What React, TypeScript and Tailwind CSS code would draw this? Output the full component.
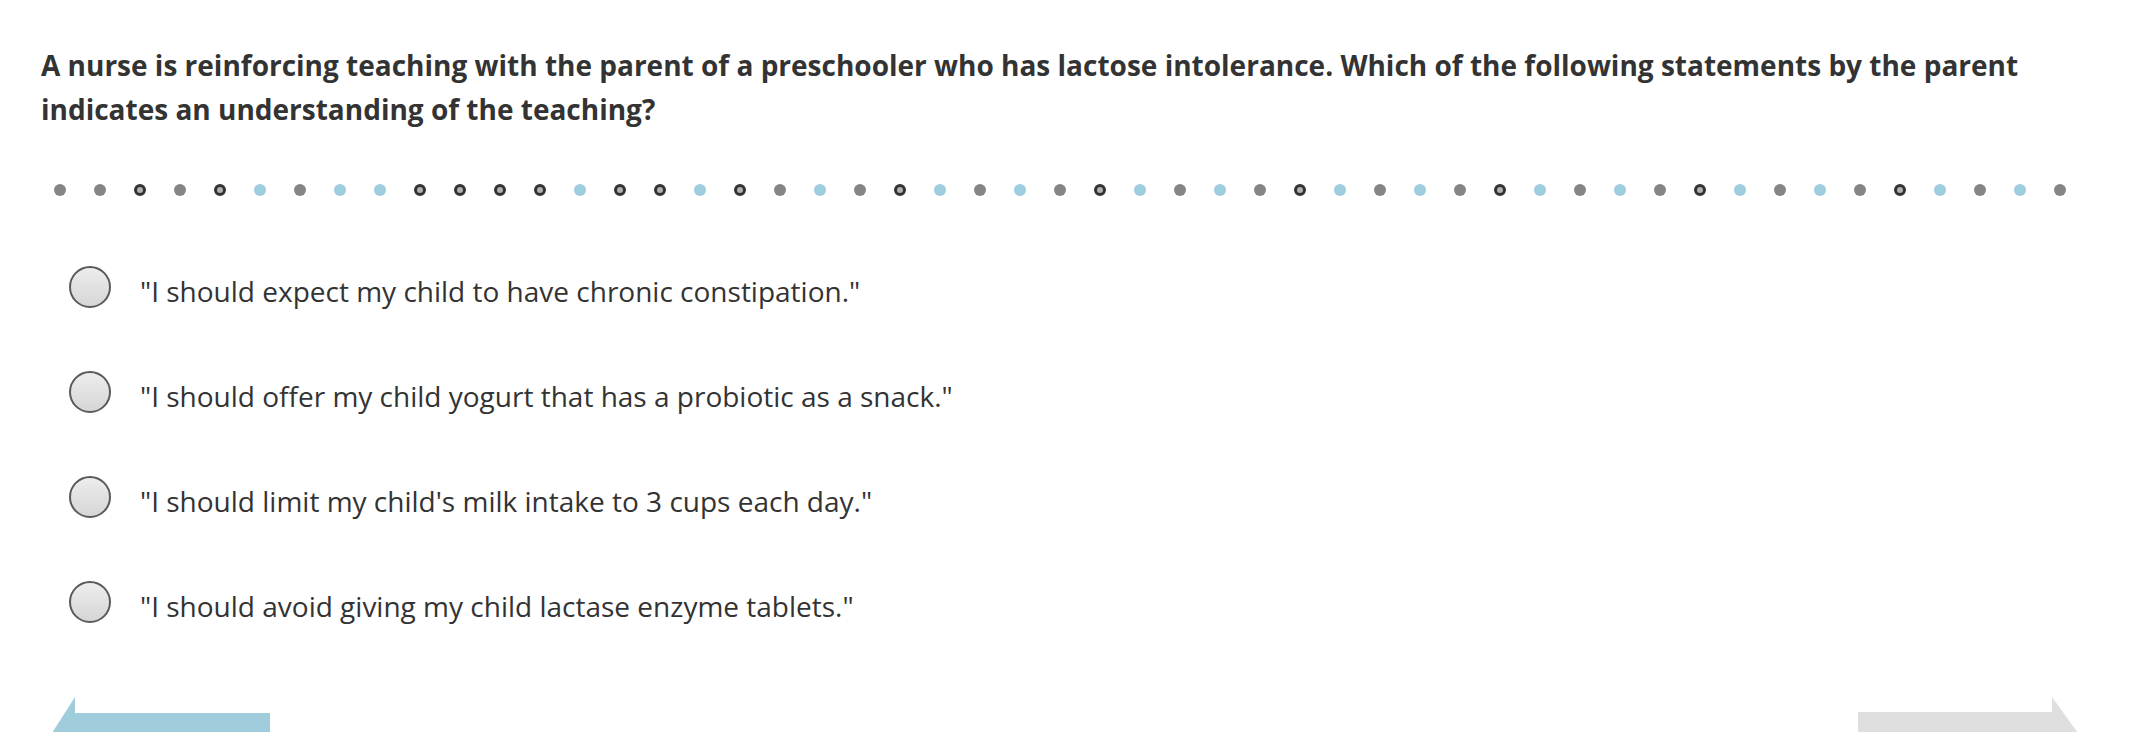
import React from 'react'

type Dot = 'g' | 'r' | 'b'

const progress: Dot[] = (
  'ggrgrbgbbrrrrbrrbrgbgrbgbgrbgbgrbgbgrbgbgrbgbgrbgbg'
).split('') as Dot[]

const options = [
  '"I should expect my child to have chronic constipation."',
  '"I should offer my child yogurt that has a probiotic as a snack."',
  '"I should limit my child\'s milk intake to 3 cups each day."',
  '"I should avoid giving my child lactase enzyme tablets."',
]

function ProgressDot({ kind }: { kind: Dot }) {
  if (kind === 'r') {
    return <span className="w-3 h-3 rounded-full border-[3px] border-[#333] bg-[#b0b0b0] shrink-0" />
  }
  return (
    <span
      className={`w-3 h-3 rounded-full shrink-0 ${kind === 'b' ? 'bg-[#9ecde0]' : 'bg-[#858585]'}`}
    />
  )
}

export default function App() {
  return (
    <div className="bg-white min-h-screen h-[732px] overflow-hidden text-[#333]" style={{ fontFamily: '"Open Sans", "Noto Sans", sans-serif' }}>
      <h1 className="pl-[41px] pr-[60px] pt-[43px] text-[28px] leading-[44px] font-bold">
        A nurse is reinforcing teaching with the parent of a preschooler who has lactose intolerance. Which of the following statements by the parent indicates an understanding of the teaching?
      </h1>

      <div className="mt-[53px] pl-[54px] flex items-center gap-[28px]">
        {progress.map((d, i) => (
          <ProgressDot key={i} kind={d} />
        ))}
      </div>

      <div className="mt-[70px] pl-[69px] flex flex-col gap-[63px]">
        {options.map((opt) => (
          <label key={opt} className="flex items-center gap-[29px] h-[42px] cursor-pointer">
            <span className="w-[42px] h-[42px] rounded-full border-2 border-[#5a5a5a] bg-gradient-to-b from-[#ededed] to-[#d6d6d6] shrink-0" />
            <span className="text-[28px] leading-[38px] pt-[8px]">{opt}</span>
          </label>
        ))}
      </div>

      <div className="mt-[74px] flex justify-between pl-[52px] pr-[62px]">
        <button className="block">
          <svg width="218" height="72" viewBox="0 0 218 72">
            <polygon points="23,0 0,36 23,72 23,56 218,56 218,16 23,16" fill="#9fcddb" />
          </svg>
        </button>
        <button className="block">
          <svg width="220" height="72" viewBox="0 0 220 72">
            <polygon points="0,15 194,15 194,0 220,36 194,72 194,57 0,57" fill="#e0dfe0" />
          </svg>
        </button>
      </div>
    </div>
  )
}
